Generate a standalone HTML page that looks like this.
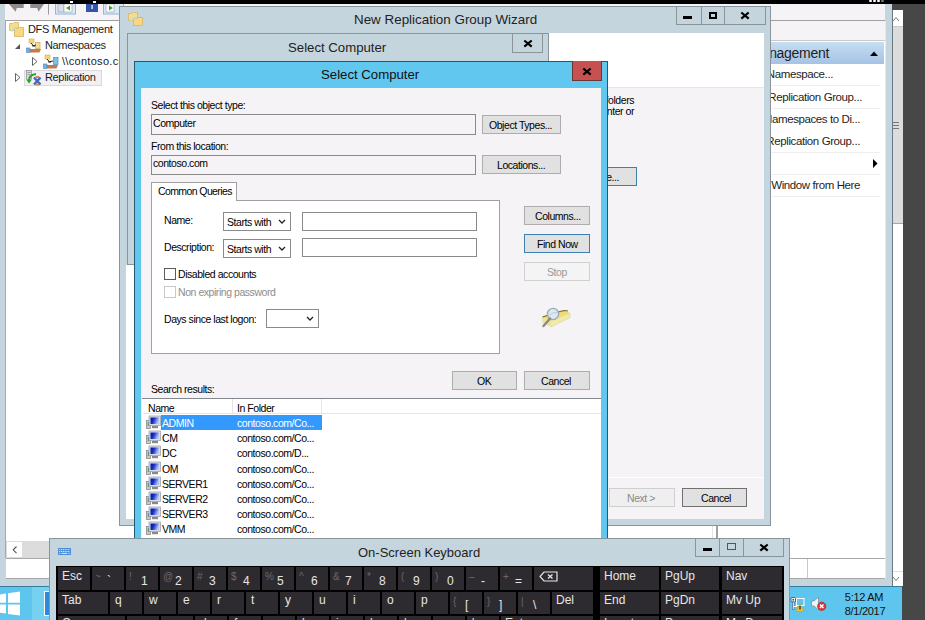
<!DOCTYPE html>
<html><head><meta charset="utf-8">
<style>
*{margin:0;padding:0;box-sizing:border-box}
html,body{width:925px;height:620px;overflow:hidden;background:#474747;font-family:"Liberation Sans",sans-serif;position:relative}
.a{position:absolute}
.t{position:absolute;white-space:pre;line-height:1}
.fr{background:#c5d5dd}
.d{font-size:10.5px;letter-spacing:-0.45px;color:#000}
.s{font-size:11px;letter-spacing:-0.35px;color:#1a1a1a}
.btn{position:absolute;background:#e1e1e1;border:1px solid #adadad}
.tb{position:absolute;background:#f5f3f6;border:1px solid #8a8a8a}
.k{position:absolute;background:#2e2b30;color:#e6e6e6;font-size:12px;line-height:1;white-space:pre}
.kb{position:absolute;top:4px;left:4px}
.ks{position:absolute;top:5px;left:3px;font-size:10px;color:#6a686d}
.kl{position:absolute;top:10px;left:15px}
.row{position:absolute;left:146px;height:15px;width:176px}
.ic{position:absolute;left:0;top:0}
</style></head><body>
<!-- top black bar -->
<div class="a" style="left:0;top:0;width:925px;height:4px;background:#000"></div>
<div class="a" style="left:70px;top:1px;width:3px;height:2px;background:#fff"></div>
<div class="a" style="left:93px;top:1px;width:3px;height:2px;background:#fff"></div>
<div class="a" style="left:869px;top:0;width:3px;height:2px;background:#fff;border-radius:1px"></div>
<div class="a" style="left:873px;top:0;width:3px;height:2px;background:#fff;border-radius:1px"></div>
<div class="a" style="left:877px;top:0;width:3px;height:2px;background:#fff;border-radius:1px"></div>
<div class="a" style="left:881px;top:0;width:3px;height:2px;background:#777;border-radius:1px"></div>

<!-- ============ MMC window ============ -->
<div class="a fr" style="left:0;top:4px;width:892px;height:582px"></div>
<div class="a" style="left:5px;top:4px;width:880px;height:16px;background:#f5f3f6"></div>
<!-- toolbar icons -->
<svg class="a" style="left:5px;top:4px" width="120" height="16">
  <path d="M4 0 L18.7 0 L18.7 4 L11.8 4 L10.6 7.8 Z" fill="#8c8c8c"/>
  <path d="M39 0 L25.3 0 L25.3 4 L32.2 4 L33.4 7.8 Z" fill="#8c8c8c"/>
  <rect x="43" y="0" width="1" height="10.5" fill="#9a9a9a"/>
  <rect x="50.5" y="-1" width="20" height="11" fill="#d8eaf8" stroke="#8ab8e0"/>
  <rect x="53" y="0" width="6" height="8" fill="#dde" stroke="#999" stroke-width="0.6"/>
  <rect x="59" y="0" width="8" height="8" fill="#fff" stroke="#999" stroke-width="0.6"/>
  <path d="M61 4 L65 1.5 L65 6.5 Z" fill="#40a040"/>
  <rect x="81" y="0" width="12" height="8" fill="#3553a8"/>
  <rect x="86.5" y="1" width="1.2" height="4" fill="#fff"/>
  <rect x="98.5" y="-1" width="20" height="11" fill="#d8eaf8" stroke="#8ab8e0"/>
  <rect x="101" y="0" width="8" height="8" fill="#fff" stroke="#999" stroke-width="0.6"/>
  <path d="M104 1.5 L108 4 L104 6.5 Z" fill="#40a040"/>
</svg>
<div class="a" style="left:5px;top:20px;width:880px;height:1px;background:#a0a0a0"></div>
<div class="a" style="left:5px;top:21px;width:880px;height:537px;background:#fff;border-left:1px solid #a8a8a8"></div>
<!-- tree -->
<svg class="a" style="left:9px;top:22px" width="16" height="16">
  <path d="M0.5 1.5 L4 1.5 L5 0.5 L9.5 0.5 L9.5 8.5 L0.5 8.5 Z" fill="#f8dc88" stroke="#dcb868" stroke-width="0.8"/>
  <path d="M5.5 6.5 L9 6.5 L10 5.5 L14.5 5.5 L14.5 14.5 L5.5 14.5 Z" fill="#f8d880" stroke="#d8b060" stroke-width="0.8"/>
  <path d="M2.5 9.5 Q5 5 9 5.5" stroke="#b8e0dc" stroke-width="1.6" fill="none"/>
</svg>
<div class="t s" style="left:28px;top:24px">DFS Management</div>
<svg class="a" style="left:14px;top:43px" width="8" height="8"><path d="M6 1 L6 6 L1 6 Z" fill="#555"/></svg>
<svg class="a" style="left:26px;top:38px" width="16" height="16">
  <rect x="3" y="1" width="5" height="4" fill="#f2d67a" stroke="#d0b060" stroke-width="0.6"/>
  <rect x="9.5" y="4.5" width="4.5" height="6" fill="#f4dc96" stroke="#c8a850" stroke-width="0.7"/>
  <path d="M5 5 L8.5 9 M6 8 L10 7" stroke="#222" stroke-width="1"/>
  <path d="M2 11 L15 11 L13.5 14.5 L4 14.5 Z" fill="#c47a50"/>
  <rect x="0.5" y="10" width="3.5" height="4.5" fill="#78b0dc" stroke="#4a88b8" stroke-width="0.6"/>
</svg>
<div class="t s" style="left:45px;top:40px">Namespaces</div>
<svg class="a" style="left:31px;top:57px" width="8" height="9"><path d="M1.5 0.5 L6 4.5 L1.5 8.5 Z" fill="none" stroke="#666"/></svg>
<svg class="a" style="left:43px;top:54px" width="16" height="16">
  <rect x="2" y="1" width="5" height="4" fill="#f2d67a" stroke="#d0b060" stroke-width="0.6"/>
  <rect x="10.5" y="3.5" width="4.5" height="7" fill="#80c0e0" stroke="#4a90c0" stroke-width="0.7"/>
  <path d="M4 5 L7.5 9 M5 8 L10 7" stroke="#222" stroke-width="1"/>
  <path d="M2 11 L15 11 L13.5 14.5 L4 14.5 Z" fill="#c47a50"/>
  <rect x="0.5" y="10" width="3.5" height="4.5" fill="#78b0dc" stroke="#4a88b8" stroke-width="0.6"/>
</svg>
<div class="t s" style="left:62px;top:56px;letter-spacing:0.3px">\\contoso.com</div>
<div class="a" style="left:24px;top:70px;width:78px;height:16px;background:#f2f0f4;border:1px solid #dadada"></div>
<svg class="a" style="left:14px;top:73px" width="8" height="9"><path d="M1.5 0.5 L6 4.5 L1.5 8.5 Z" fill="none" stroke="#666"/></svg>
<svg class="a" style="left:26px;top:70px" width="16" height="16">
  <rect x="0.5" y="0.5" width="5" height="9" fill="#dcdcdc" stroke="#8a8a8a" stroke-width="0.7"/>
  <path d="M1.5 2.5 H4.5 M1.5 4.5 H4.5" stroke="#777" stroke-width="0.6"/>
  <path d="M3 12 Q2 5 10 4" stroke="#30a030" stroke-width="2" fill="none"/>
  <path d="M0.5 10 L3 13.5 L5.5 10 Z" fill="#30a030"/>
  <path d="M8 7.5 L14.5 14.5 M14.5 7.5 L8 14.5" stroke="#3a6ab8" stroke-width="2.4"/>
  <rect x="9.5" y="6" width="3.5" height="2" fill="#d88a50"/>
  <rect x="9.5" y="13.5" width="3.5" height="2" fill="#d88a50"/>
</svg>
<div class="t s" style="left:45px;top:72px">Replication</div>

<!-- actions pane -->
<div class="a" style="left:766px;top:21px;width:119px;height:20px;background:#f5f3f6"></div>
<div class="a" style="left:766px;top:40px;width:119px;height:1px;background:#c8c8c8"></div>
<div class="a" style="left:766px;top:42px;width:118px;height:22px;background:linear-gradient(#c6ddf3,#a5c3e3)"></div>
<div class="t" style="right:96px;top:46px;font-size:14px;letter-spacing:-0.3px;color:#1e1e1e">Management</div>
<svg class="a" style="left:870px;top:51px" width="8" height="5"><path d="M0 5 L4 0.5 L8 5 Z" fill="#000"/></svg>
<div class="t" style="right:92px;top:69px;font-size:11.5px;letter-spacing:-0.4px;color:#1e1e1e">New Namespace...</div>
<div class="t" style="right:63px;top:92px;font-size:11.5px;letter-spacing:-0.4px;color:#1e1e1e">New Replication Group...</div>
<div class="t" style="right:65px;top:114px;font-size:11.5px;letter-spacing:-0.4px;color:#1e1e1e">Add Namespaces to Di...</div>
<div class="t" style="right:65px;top:136px;font-size:11.5px;letter-spacing:-0.4px;color:#1e1e1e">Add Replication Group...</div>
<svg class="a" style="left:873px;top:159px" width="5" height="9"><path d="M0 0 L4.5 4.5 L0 9 Z" fill="#000"/></svg>
<div class="t" style="right:65px;top:180px;font-size:11.5px;letter-spacing:-0.4px;color:#1e1e1e">New Window from Here</div>
<div class="a" style="left:766px;top:85px;width:114px;height:1px;background:#eeeeee"></div>
<div class="a" style="left:766px;top:108px;width:114px;height:1px;background:#eeeeee"></div>
<div class="a" style="left:766px;top:152px;width:114px;height:1px;background:#eeeeee"></div>
<div class="a" style="left:766px;top:174px;width:114px;height:1px;background:#eeeeee"></div>
<div class="a" style="left:766px;top:196px;width:114px;height:1px;background:#eeeeee"></div>
<!-- splitter lines -->
<div class="a" style="left:712px;top:520px;width:1px;height:38px;background:#e4e4e4"></div>
<div class="a" style="left:716px;top:520px;width:2px;height:38px;background:#a0a0a0"></div>
<!-- h scrollbar -->
<div class="a" style="left:6px;top:541px;width:700px;height:17px;background:#dcdcdc"></div>
<div class="a" style="left:7px;top:542px;width:15px;height:15px;background:#fff"></div>
<svg class="a" style="left:12px;top:546px" width="6" height="8"><path d="M4.5 0.5 L1.2 3.8 L4.5 7.1" fill="none" stroke="#555" stroke-width="1.1"/></svg>
<!-- status bar -->
<div class="a" style="left:6px;top:558px;width:879px;height:21px;background:#fff;border-top:1px solid #a8a8a8;border-bottom:1px solid #a8a8a8"></div>
<div class="a" style="left:807px;top:559px;width:1px;height:19px;background:#c8c8c8"></div>
<div class="a" style="left:885px;top:21px;width:1px;height:558px;background:#e8e8e8"></div>
<!-- right scrollbar strip -->
<div class="a" style="left:892px;top:4px;width:11px;height:6px;background:#474747"></div>
<div class="a" style="left:892px;top:10px;width:1px;height:576px;background:#6a7a84"></div>
<div class="a" style="left:893px;top:10px;width:10px;height:576px;background:#fff"></div>
<div class="a" style="left:893px;top:26px;width:10px;height:198px;background:#dcdcdc;border-bottom:1px solid #a8a8a8;border-top:1px solid #c8c8c8"></div>
<div class="a" style="left:893px;top:122px;width:6px;height:1px;background:#777"></div>
<div class="a" style="left:893px;top:125px;width:6px;height:1px;background:#777"></div>
<div class="a" style="left:893px;top:128px;width:6px;height:1px;background:#777"></div>
<div class="a" style="left:893px;top:571px;width:10px;height:1px;background:#dcdcdc"></div>
<svg class="a" style="left:892px;top:15px" width="10" height="8"><path d="M1 6 L4 2.5 L7 6" fill="none" stroke="#777" stroke-width="1"/></svg>
<svg class="a" style="left:892px;top:575px" width="10" height="8"><path d="M1 2 L4 5.5 L7 2" fill="none" stroke="#777" stroke-width="1"/></svg>

<!-- ============ Wizard ============ -->
<div class="a fr" style="left:119px;top:6px;width:652px;height:520px;border:1px solid #8a959b"></div>
<div class="t" style="left:354px;top:13px;font-size:13.4px;color:#222">New Replication Group Wizard</div>
<svg class="a" style="left:128px;top:12px" width="16" height="15">
  <path d="M0.5 1.5 L4 1.5 L5 0.5 L9.5 0.5 L9.5 8.5 L0.5 8.5 Z" fill="#f8dc88" stroke="#dcb868" stroke-width="0.8"/>
  <path d="M5.5 6.5 L9 6.5 L10 5.5 L14.5 5.5 L14.5 13.5 L5.5 13.5 Z" fill="#f8d880" stroke="#d8b060" stroke-width="0.8"/>
  <path d="M2.5 9.5 Q5 5 9 5.5" stroke="#b8e0dc" stroke-width="1.6" fill="none"/>
</svg>
<div class="a" style="left:676px;top:6px;width:90px;height:19px;border:1px solid #8a959b;border-top:none"></div>
<div class="a" style="left:701px;top:6px;width:1px;height:19px;background:#8a959b"></div>
<div class="a" style="left:724px;top:6px;width:1px;height:19px;background:#8a959b"></div>
<div class="a" style="left:683px;top:16px;width:9px;height:3px;background:#000"></div>
<div class="a" style="left:709px;top:12px;width:8px;height:7px;border:2px solid #000"></div>
<svg class="a" style="left:740px;top:11px" width="10" height="9"><path d="M1.3 1.5 L8.7 7.7 M8.7 1.5 L1.3 7.7" stroke="#000" stroke-width="2.2"/></svg>
<div class="a" style="left:126px;top:33px;width:638px;height:486px;background:#fff"></div>
<div class="a" style="left:600px;top:88px;width:164px;height:431px;background:#f5f3f6"></div>
<div class="a" style="left:126px;top:33px;width:638px;height:54px;background:#fff"></div>
<div class="a" style="left:126px;top:87px;width:638px;height:1px;background:#e6e6e6"></div>
<div class="t d" style="right:291px;top:95px">replicated folders</div>
<div class="t d" style="right:291px;top:106px">Data Center or</div>
<div class="a" style="left:590px;top:167px;width:47px;height:19px;background:#e1e1e1;border:1px solid #3c7fb1"></div>
<div class="t d" style="right:306px;top:172px">Browse...</div>
<div class="a" style="left:126px;top:477px;width:638px;height:1px;background:#fff"></div>
<div class="a" style="left:609px;top:488px;width:66px;height:19px;background:#efefef;border:1px solid #cfcfcf"></div>
<div class="t d" style="left:627px;top:493px;color:#8a8a8a">Next &gt;</div>
<div class="a" style="left:682px;top:488px;width:65px;height:19px;background:#e1e1e1;border:1px solid #707070"></div>
<div class="t d" style="left:701px;top:493px">Cancel</div>

<!-- inner inactive dialog -->
<div class="a fr" style="left:126px;top:33px;width:1px;height:232px"></div>
<div class="a fr" style="left:127px;top:33px;width:422px;height:232px;border:1px solid #8a959b"></div>
<div class="t" style="left:288px;top:41px;font-size:13.2px;color:#222">Select Computer</div>
<div class="a" style="left:512px;top:33px;width:31px;height:20px;border:1px solid #8a959b;border-top:none"></div>
<svg class="a" style="left:523px;top:39px" width="10" height="9"><path d="M1.3 1.5 L8.7 7.7 M8.7 1.5 L1.3 7.7" stroke="#000" stroke-width="2.2"/></svg>

<!-- ============ active dialog ============ -->
<div class="a" style="left:134px;top:61px;width:474px;height:500px;background:#61c7ee;border:1px solid #245a70"></div>
<div class="a" style="left:572px;top:61px;width:30px;height:20px;background:#c75050;border:1px solid #6a3535;border-top:none"></div>
<svg class="a" style="left:582px;top:67px" width="10" height="9"><path d="M1.3 1.5 L8.7 7.7 M8.7 1.5 L1.3 7.7" stroke="#000" stroke-width="2.2"/></svg>
<div class="t" style="left:321px;top:68px;font-size:13.2px;color:#111">Select Computer</div>
<div class="a" style="left:141px;top:88px;width:460px;height:470px;background:#f5f3f6"></div>

<div class="t d" style="left:151px;top:100px">Select this object type:</div>
<div class="tb" style="left:151px;top:114px;width:325px;height:21px"></div>
<div class="t d" style="left:153px;top:118px">Computer</div>
<div class="btn" style="left:482px;top:115px;width:79px;height:19px"></div>
<div class="t d" style="left:489px;top:120px">Object Types...</div>

<div class="t d" style="left:151px;top:141px">From this location:</div>
<div class="tb" style="left:151px;top:155px;width:325px;height:20px"></div>
<div class="t d" style="left:153px;top:158px">contoso.com</div>
<div class="btn" style="left:482px;top:155px;width:79px;height:19px"></div>
<div class="t d" style="left:497px;top:160px">Locations...</div>

<!-- query panel -->
<div class="a" style="left:151px;top:200px;width:349px;height:154px;background:#fff;border:1px solid #a0a0a0"></div>
<div class="a" style="left:151px;top:182px;width:86px;height:19px;background:#fff;border:1px solid #a0a0a0;border-bottom:none"></div>
<div class="t d" style="left:158px;top:186px;letter-spacing:-0.6px">Common Queries</div>

<div class="t d" style="left:164px;top:215px">Name:</div>
<div class="a" style="left:223px;top:212px;width:68px;height:19px;background:#fff;border:1px solid #8a8a8a"></div>
<div class="t d" style="left:227px;top:217px">Starts with</div>
<svg class="a" style="left:278px;top:219px" width="8" height="6"><path d="M1 1 L4 4 L7 1" fill="none" stroke="#222" stroke-width="1.3"/></svg>
<div class="a" style="left:302px;top:212px;width:175px;height:19px;background:#fff;border:1px solid #8a8a8a"></div>

<div class="t d" style="left:164px;top:242px">Description:</div>
<div class="a" style="left:223px;top:239px;width:68px;height:19px;background:#fff;border:1px solid #8a8a8a"></div>
<div class="t d" style="left:227px;top:244px">Starts with</div>
<svg class="a" style="left:278px;top:246px" width="8" height="6"><path d="M1 1 L4 4 L7 1" fill="none" stroke="#222" stroke-width="1.3"/></svg>
<div class="a" style="left:302px;top:238px;width:175px;height:19px;background:#fff;border:1px solid #8a8a8a"></div>

<div class="a" style="left:164px;top:268px;width:12px;height:12px;background:#fff;border:1px solid #5a5a5a"></div>
<div class="t d" style="left:178px;top:269px">Disabled accounts</div>
<div class="a" style="left:164px;top:286px;width:12px;height:12px;background:#fff;border:1px solid #c8c8c8"></div>
<div class="t d" style="left:178px;top:287px;color:#8d8d8d">Non expiring password</div>

<div class="t d" style="left:164px;top:314px">Days since last logon:</div>
<div class="a" style="left:266px;top:309px;width:53px;height:19px;background:#fff;border:1px solid #8a8a8a"></div>
<svg class="a" style="left:306px;top:316px" width="8" height="6"><path d="M1 1 L4 4 L7 1" fill="none" stroke="#222" stroke-width="1.3"/></svg>

<div class="btn" style="left:524px;top:206px;width:66px;height:19px"></div>
<div class="t d" style="left:535px;top:211px">Columns...</div>
<div class="btn" style="left:524px;top:234px;width:66px;height:19px;border-color:#3c7fb1"></div>
<div class="t d" style="left:537px;top:239px">Find Now</div>
<div class="btn" style="left:524px;top:262px;width:66px;height:19px;background:#f4f4f4;border-color:#d0d0d0"></div>
<div class="t d" style="left:547px;top:267px;color:#9a9a9a">Stop</div>
<!-- search icon -->
<svg class="a" style="left:540px;top:306px" width="32" height="24">
  <path d="M2 11 L24 4.5 L30 7 L10 15 Z" fill="#eedc70"/>
  <path d="M10 15 L30 7 L30 11.5 L11 21 Z" fill="#f2eaa8" stroke="#d8cc80" stroke-width="0.5"/>
  <path d="M2 11 L10 15 L11 21 L2.5 17 Z" fill="#ece4a0"/>
  <path d="M2.5 11 L12 8 M18 6 L24 4.5 L28 5" stroke="#7a6420" stroke-width="1.2" fill="none"/>
  <circle cx="13" cy="8" r="5.6" fill="#dce9f2" stroke="#9ba8b2" stroke-width="1.3"/>
  <path d="M8.5 9.5 Q13 6 17.5 6.5" stroke="#aab8c0" stroke-width="0.6" fill="none"/>
  <path d="M10 12.5 L3.5 20" stroke="#8a8a8a" stroke-width="2.4" stroke-linecap="round"/>
</svg>

<div class="btn" style="left:452px;top:371px;width:65px;height:19px"></div>
<div class="t d" style="left:477px;top:376px">OK</div>
<div class="btn" style="left:524px;top:371px;width:66px;height:19px"></div>
<div class="t d" style="left:541px;top:376px">Cancel</div>

<div class="t d" style="left:151px;top:384px">Search results:</div>
<!-- list -->
<div class="a" style="left:142px;top:398px;width:459px;height:160px;background:#fff;border-top:1px solid #828790"></div>
<div class="a" style="left:143px;top:413px;width:458px;height:1px;background:#e5e5e5"></div>
<div class="a" style="left:232px;top:399px;width:1px;height:14px;background:#e5e5e5"></div>
<div class="a" style="left:321px;top:399px;width:1px;height:14px;background:#e5e5e5"></div>
<div class="t d" style="left:148px;top:403px">Name</div>
<div class="t d" style="left:237px;top:403px">In Folder</div>
<div class="a" style="left:161px;top:415px;width:161px;height:15px;background:#3399ff"></div>
<svg width="0" height="0" style="position:absolute"><defs><linearGradient id="scr" x1="0" y1="0" x2="1" y2="0.3"><stop offset="0" stop-color="#0010a0"/><stop offset="0.45" stop-color="#1830c8"/><stop offset="1" stop-color="#b8c8f0"/></linearGradient></defs></svg>
<div class="row" style="top:415px"><svg class="ic" width="16" height="15"><rect x="0.5" y="5.5" width="4" height="8" fill="#c8c8c8" stroke="#8a8a8a" stroke-width="0.8"/><rect x="1.8" y="7" width="1.2" height="4" fill="#4a9a4a"/><rect x="3" y="1" width="11.5" height="9.5" fill="#d8dce8" stroke="#a0a4b0" stroke-width="0.8"/><rect x="4.5" y="2.5" width="8.5" height="6.5" fill="url(#scr)"/><rect x="6" y="11" width="6" height="2.2" fill="#888"/></svg><div class="t d" style="left:16px;top:3px;color:#fff">ADMIN</div><div class="t d" style="left:91px;top:3px;color:#fff">contoso.com/Co...</div></div>
<div class="row" style="top:430px"><svg class="ic" width="16" height="15"><rect x="0.5" y="5.5" width="4" height="8" fill="#c8c8c8" stroke="#8a8a8a" stroke-width="0.8"/><rect x="1.8" y="7" width="1.2" height="4" fill="#4a9a4a"/><rect x="3" y="1" width="11.5" height="9.5" fill="#d8dce8" stroke="#a0a4b0" stroke-width="0.8"/><rect x="4.5" y="2.5" width="8.5" height="6.5" fill="url(#scr)"/><rect x="6" y="11" width="6" height="2.2" fill="#888"/></svg><div class="t d" style="left:16px;top:3px">CM</div><div class="t d" style="left:91px;top:3px">contoso.com/Co...</div></div>
<div class="row" style="top:445px"><svg class="ic" width="16" height="15"><rect x="0.5" y="5.5" width="4" height="8" fill="#c8c8c8" stroke="#8a8a8a" stroke-width="0.8"/><rect x="1.8" y="7" width="1.2" height="4" fill="#4a9a4a"/><rect x="3" y="1" width="11.5" height="9.5" fill="#d8dce8" stroke="#a0a4b0" stroke-width="0.8"/><rect x="4.5" y="2.5" width="8.5" height="6.5" fill="url(#scr)"/><rect x="6" y="11" width="6" height="2.2" fill="#888"/></svg><div class="t d" style="left:16px;top:3px">DC</div><div class="t d" style="left:91px;top:3px">contoso.com/D...</div></div>
<div class="row" style="top:461px"><svg class="ic" width="16" height="15"><rect x="0.5" y="5.5" width="4" height="8" fill="#c8c8c8" stroke="#8a8a8a" stroke-width="0.8"/><rect x="1.8" y="7" width="1.2" height="4" fill="#4a9a4a"/><rect x="3" y="1" width="11.5" height="9.5" fill="#d8dce8" stroke="#a0a4b0" stroke-width="0.8"/><rect x="4.5" y="2.5" width="8.5" height="6.5" fill="url(#scr)"/><rect x="6" y="11" width="6" height="2.2" fill="#888"/></svg><div class="t d" style="left:16px;top:3px">OM</div><div class="t d" style="left:91px;top:3px">contoso.com/Co...</div></div>
<div class="row" style="top:476px"><svg class="ic" width="16" height="15"><rect x="0.5" y="5.5" width="4" height="8" fill="#c8c8c8" stroke="#8a8a8a" stroke-width="0.8"/><rect x="1.8" y="7" width="1.2" height="4" fill="#4a9a4a"/><rect x="3" y="1" width="11.5" height="9.5" fill="#d8dce8" stroke="#a0a4b0" stroke-width="0.8"/><rect x="4.5" y="2.5" width="8.5" height="6.5" fill="url(#scr)"/><rect x="6" y="11" width="6" height="2.2" fill="#888"/></svg><div class="t d" style="left:16px;top:3px">SERVER1</div><div class="t d" style="left:91px;top:3px">contoso.com/Co...</div></div>
<div class="row" style="top:491px"><svg class="ic" width="16" height="15"><rect x="0.5" y="5.5" width="4" height="8" fill="#c8c8c8" stroke="#8a8a8a" stroke-width="0.8"/><rect x="1.8" y="7" width="1.2" height="4" fill="#4a9a4a"/><rect x="3" y="1" width="11.5" height="9.5" fill="#d8dce8" stroke="#a0a4b0" stroke-width="0.8"/><rect x="4.5" y="2.5" width="8.5" height="6.5" fill="url(#scr)"/><rect x="6" y="11" width="6" height="2.2" fill="#888"/></svg><div class="t d" style="left:16px;top:3px">SERVER2</div><div class="t d" style="left:91px;top:3px">contoso.com/Co...</div></div>
<div class="row" style="top:506px"><svg class="ic" width="16" height="15"><rect x="0.5" y="5.5" width="4" height="8" fill="#c8c8c8" stroke="#8a8a8a" stroke-width="0.8"/><rect x="1.8" y="7" width="1.2" height="4" fill="#4a9a4a"/><rect x="3" y="1" width="11.5" height="9.5" fill="#d8dce8" stroke="#a0a4b0" stroke-width="0.8"/><rect x="4.5" y="2.5" width="8.5" height="6.5" fill="url(#scr)"/><rect x="6" y="11" width="6" height="2.2" fill="#888"/></svg><div class="t d" style="left:16px;top:3px">SERVER3</div><div class="t d" style="left:91px;top:3px">contoso.com/Co...</div></div>
<div class="row" style="top:521px"><svg class="ic" width="16" height="15"><rect x="0.5" y="5.5" width="4" height="8" fill="#c8c8c8" stroke="#8a8a8a" stroke-width="0.8"/><rect x="1.8" y="7" width="1.2" height="4" fill="#4a9a4a"/><rect x="3" y="1" width="11.5" height="9.5" fill="#d8dce8" stroke="#a0a4b0" stroke-width="0.8"/><rect x="4.5" y="2.5" width="8.5" height="6.5" fill="url(#scr)"/><rect x="6" y="11" width="6" height="2.2" fill="#888"/></svg><div class="t d" style="left:16px;top:3px">VMM</div><div class="t d" style="left:91px;top:3px">contoso.com/Co...</div></div>

<!-- ============ taskbar ============ -->
<div class="a" style="left:0;top:586px;width:902px;height:34px;background:#5ec5ee;border-top:1px solid #3a7a98"></div>
<div class="a" style="left:32px;top:587px;width:17px;height:33px;background:#76d0f0"></div>
<svg class="a" style="left:0;top:591px" width="22" height="25">
  <path d="M0 3.5 L6 2.6 L6 11.8 L0 11.8 Z M8 2.3 L20 0.5 L20 11.8 L8 11.8 Z M0 13.6 L6 13.6 L6 22.6 L0 21.8 Z M8 13.6 L20 13.6 L20 24.5 L8 22.9 Z" fill="#fff"/>
</svg>
<div class="a" style="left:44px;top:591px;width:6px;height:25px;background:#2d8ad8;border:1px solid #fff;border-right:none"></div>
<!-- tray -->
<svg class="a" style="left:790px;top:596px" width="16" height="16">
  <rect x="1" y="1.5" width="4.5" height="4.5" rx="1" fill="#fff" stroke="#2a5a78" stroke-width="0.9"/>
  <rect x="2.4" y="2.9" width="1.7" height="1.7" fill="#2a5a78"/>
  <rect x="2.5" y="6" width="1.6" height="7.5" fill="#fff" stroke="#2a5a78" stroke-width="0.6"/>
  <rect x="6.5" y="2.5" width="7.5" height="7" fill="none" stroke="#fff" stroke-width="1"/>
  <path d="M4 10.5 H7" stroke="#fff" stroke-width="1"/>
  <path d="M6 15.5 L10 7.5 L14 15.5 Z" fill="#f4c430" stroke="#c89a10" stroke-width="0.6"/>
  <rect x="9.4" y="10" width="1.2" height="3.6" fill="#222"/>
</svg>
<svg class="a" style="left:810px;top:596px" width="18" height="16">
  <path d="M1.5 5 L4 5 L8.5 1 L8.5 14 L4 10 L1.5 10 Z" fill="#f2f2f2" stroke="#6a8a9a" stroke-width="0.7"/>
  <circle cx="11.7" cy="10.3" r="4.2" fill="#d83838" stroke="#a02020" stroke-width="0.5"/>
  <path d="M9.9 8.5 L13.5 12.1 M13.5 8.5 L9.9 12.1" stroke="#fff" stroke-width="1.4"/>
</svg>
<div class="t" style="left:834px;top:592px;width:60px;font-size:11px;letter-spacing:-0.3px;color:#111;text-align:center">5:12 AM</div>
<div class="t" style="left:835px;top:606px;width:60px;font-size:11px;letter-spacing:-0.3px;color:#111;text-align:center">8/1/2017</div>

<!-- ============ OSK ============ -->
<div class="a fr" style="left:49px;top:538px;width:741px;height:82px;border:1px solid #8a959b;border-bottom:none"></div>
<div class="t" style="left:358px;top:546px;font-size:13px;color:#222">On-Screen Keyboard</div>
<svg class="a" style="left:58px;top:548px" width="14" height="7">
  <rect x="0" y="0" width="13" height="7" rx="0.5" fill="#4f8fd8"/>
  <path d="M1.2 1.6 H11.8" stroke="#e8f0ff" stroke-width="0.9" stroke-dasharray="1.1 0.7"/>
  <path d="M1.2 3.5 H11.8" stroke="#e8f0ff" stroke-width="0.9" stroke-dasharray="1.1 0.7"/>
  <path d="M1.2 5.4 H2.4 M3.6 5.4 H9.4 M10.6 5.4 H11.8" stroke="#e8f0ff" stroke-width="0.9"/>
</svg>
<div class="a" style="left:695px;top:538px;width:89px;height:19px;border:1px solid #8a959b;border-top:none"></div>
<div class="a" style="left:719px;top:538px;width:1px;height:18px;background:#8a959b"></div>
<div class="a" style="left:743px;top:538px;width:1px;height:18px;background:#8a959b"></div>
<div class="a" style="left:703px;top:548px;width:9px;height:3px;background:#000"></div>
<div class="a" style="left:727px;top:543px;width:9px;height:7px;border:1.5px solid #555"></div>
<svg class="a" style="left:759px;top:543px" width="10" height="9"><path d="M1.3 1.5 L8.7 7.7 M8.7 1.5 L1.3 7.7" stroke="#000" stroke-width="2.2"/></svg>
<div class="a" style="left:56px;top:566px;width:728px;height:54px;background:#000"></div>
<!--KEYS--><div class="k" style="left:58px;top:567px;width:32px;height:23px"><span class="kb" style="top:3px">Esc</span></div>
<div class="k" style="left:92px;top:567px;width:32px;height:23px"><span class="ks">~</span><span class="kl" style="top:8px">`</span></div>
<div class="k" style="left:126px;top:567px;width:32px;height:23px"><span class="ks">!</span><span class="kl" style="top:8px">1</span></div>
<div class="k" style="left:160px;top:567px;width:32px;height:23px"><span class="ks">@</span><span class="kl" style="top:8px">2</span></div>
<div class="k" style="left:194px;top:567px;width:32px;height:23px"><span class="ks">#</span><span class="kl" style="top:8px">3</span></div>
<div class="k" style="left:228px;top:567px;width:32px;height:23px"><span class="ks">$</span><span class="kl" style="top:8px">4</span></div>
<div class="k" style="left:262px;top:567px;width:32px;height:23px"><span class="ks">%</span><span class="kl" style="top:8px">5</span></div>
<div class="k" style="left:296px;top:567px;width:32px;height:23px"><span class="ks">^</span><span class="kl" style="top:8px">6</span></div>
<div class="k" style="left:330px;top:567px;width:32px;height:23px"><span class="ks">&</span><span class="kl" style="top:8px">7</span></div>
<div class="k" style="left:364px;top:567px;width:32px;height:23px"><span class="ks">*</span><span class="kl" style="top:8px">8</span></div>
<div class="k" style="left:398px;top:567px;width:32px;height:23px"><span class="ks">(</span><span class="kl" style="top:8px">9</span></div>
<div class="k" style="left:432px;top:567px;width:32px;height:23px"><span class="ks">)</span><span class="kl" style="top:8px">0</span></div>
<div class="k" style="left:466px;top:567px;width:32px;height:23px"><span class="ks">–</span><span class="kl" style="top:8px">-</span></div>
<div class="k" style="left:500px;top:567px;width:32px;height:23px"><span class="ks">+</span><span class="kl" style="top:8px">=</span></div>
<div class="k" style="left:534px;top:567px;width:59px;height:23px"><svg style="position:absolute;left:5px;top:4px" width="20" height="11"><path d="M5 1 L18 1 L18 10 L5 10 L1 5.5 Z" fill="none" stroke="#e6e6e6" stroke-width="1.2"/><path d="M9 3.5 L13.5 7.5 M13.5 3.5 L9 7.5" stroke="#e6e6e6" stroke-width="1.4"/></svg></div>
<div class="k" style="left:58px;top:592px;width:50px;height:22px"><span class="kb" style="top:2px">Tab</span></div>
<div class="k" style="left:110px;top:592px;width:32px;height:22px"><span class="kb" style="left:5px;top:2px">q</span></div>
<div class="k" style="left:144px;top:592px;width:32px;height:22px"><span class="kb" style="left:5px;top:2px">w</span></div>
<div class="k" style="left:178px;top:592px;width:32px;height:22px"><span class="kb" style="left:5px;top:2px">e</span></div>
<div class="k" style="left:212px;top:592px;width:32px;height:22px"><span class="kb" style="left:5px;top:2px">r</span></div>
<div class="k" style="left:246px;top:592px;width:32px;height:22px"><span class="kb" style="left:5px;top:2px">t</span></div>
<div class="k" style="left:280px;top:592px;width:32px;height:22px"><span class="kb" style="left:5px;top:2px">y</span></div>
<div class="k" style="left:314px;top:592px;width:32px;height:22px"><span class="kb" style="left:5px;top:2px">u</span></div>
<div class="k" style="left:348px;top:592px;width:32px;height:22px"><span class="kb" style="left:5px;top:2px">i</span></div>
<div class="k" style="left:382px;top:592px;width:32px;height:22px"><span class="kb" style="left:5px;top:2px">o</span></div>
<div class="k" style="left:416px;top:592px;width:32px;height:22px"><span class="kb" style="left:5px;top:2px">p</span></div>
<div class="k" style="left:450px;top:592px;width:32px;height:22px"><span class="ks">{</span><span class="kl" style="top:7px">[</span></div>
<div class="k" style="left:484px;top:592px;width:32px;height:22px"><span class="ks">}</span><span class="kl" style="top:7px">]</span></div>
<div class="k" style="left:518px;top:592px;width:32px;height:22px"><span class="ks">|</span><span class="kl" style="top:7px">\</span></div>
<div class="k" style="left:552px;top:592px;width:41px;height:22px"><span class="kb" style="top:2px">Del</span></div>
<div class="k" style="left:58px;top:616px;width:67px;height:10px"><span class="kb" style="top:1px">Caps</span></div>
<div class="k" style="left:127px;top:616px;width:32px;height:10px"><span class="kb" style="left:5px;top:1px">a</span></div>
<div class="k" style="left:161px;top:616px;width:32px;height:10px"><span class="kb" style="left:5px;top:1px">s</span></div>
<div class="k" style="left:195px;top:616px;width:32px;height:10px"><span class="kb" style="left:5px;top:1px">d</span></div>
<div class="k" style="left:229px;top:616px;width:32px;height:10px"><span class="kb" style="left:5px;top:1px">f</span></div>
<div class="k" style="left:263px;top:616px;width:32px;height:10px"><span class="kb" style="left:5px;top:1px">g</span></div>
<div class="k" style="left:297px;top:616px;width:32px;height:10px"><span class="kb" style="left:5px;top:1px">h</span></div>
<div class="k" style="left:331px;top:616px;width:32px;height:10px"><span class="kb" style="left:5px;top:1px">j</span></div>
<div class="k" style="left:365px;top:616px;width:32px;height:10px"><span class="kb" style="left:5px;top:1px">k</span></div>
<div class="k" style="left:399px;top:616px;width:32px;height:10px"><span class="kb" style="left:5px;top:1px">l</span></div>
<div class="k" style="left:433px;top:616px;width:32px;height:10px"><span class="kb" style="left:5px;top:1px">;</span></div>
<div class="k" style="left:467px;top:616px;width:32px;height:10px"><span class="kb" style="left:5px;top:1px">'</span></div>
<div class="k" style="left:501px;top:616px;width:92px;height:10px"><span class="kb" style="top:1px">Enter</span></div>
<div class="k" style="left:600px;top:567px;width:59px;height:23px"><span class="kb" style="top:3px">Home</span></div>
<div class="k" style="left:661px;top:567px;width:58px;height:23px"><span class="kb" style="top:3px">PgUp</span></div>
<div class="k" style="left:722px;top:567px;width:60px;height:23px"><span class="kb" style="top:3px">Nav</span></div>
<div class="k" style="left:600px;top:592px;width:59px;height:22px"><span class="kb" style="top:2px">End</span></div>
<div class="k" style="left:661px;top:592px;width:58px;height:22px"><span class="kb" style="top:2px">PgDn</span></div>
<div class="k" style="left:722px;top:592px;width:60px;height:22px"><span class="kb" style="top:2px">Mv Up</span></div>
<div class="k" style="left:600px;top:616px;width:59px;height:10px"><span class="kb" style="top:1px">Insert</span></div>
<div class="k" style="left:661px;top:616px;width:58px;height:10px"><span class="kb" style="top:1px">Pause</span></div>
<div class="k" style="left:722px;top:616px;width:60px;height:10px"><span class="kb" style="top:1px">Mv Dn</span></div><!--/KEYS-->
</div>
</div>
</div>
</body></html>
